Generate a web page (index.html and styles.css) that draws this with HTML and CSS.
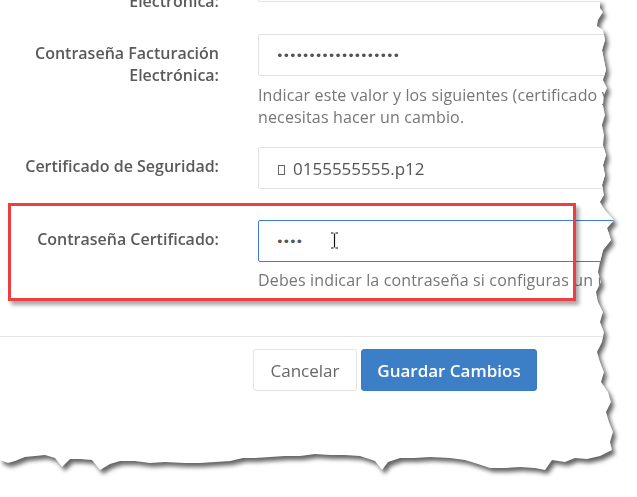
FILE: index.html
```html
<!DOCTYPE html>
<html lang="es">
<head>
<meta charset="utf-8">
<title>Configuración</title>
<link rel="stylesheet" href="styles.css">
</head>
<body>
<div class="frame">
  <div class="paper">
    <form class="form">
      <div class="group group-a">
        <label class="label">Usuario Facturación<br>Electrónica:</label>
        <div class="control"><div class="input"></div></div>
      </div>
      <div class="group group-b">
        <label class="label">Contraseña Facturación<br>Electrónica:</label>
        <div class="control">
          <div class="input"><span class="dots">•••••••••••••••••••</span></div>
          <p class="help">Indicar este valor y los siguientes (certificado y contraseña) solo si<br>necesitas hacer un cambio.</p>
        </div>
      </div>
      <div class="group group-c">
        <label class="label">Certificado de Seguridad:</label>
        <div class="control">
          <div class="input input-file"><span class="file-icon"></span><span>0155555555.p12</span></div>
        </div>
      </div>
      <div class="group group-d">
        <label class="label">Contraseña Certificado:</label>
        <div class="control">
          <div class="input input-focus"><span class="dots">••••</span>
            <svg class="ibeam" width="9" height="17" viewBox="0 0 9 17"><path d="M1 1h2.5M5.5 1H8M4.5 1.5v14M1 16h2.5M5.5 16H8" stroke="#111" stroke-width="1.2" fill="none"/></svg>
          </div>
          <p class="help">Debes indicar la contraseña si configuras un nuevo certificado.</p>
        </div>
      </div>
      <hr class="divider">
      <div class="footer">
        <button type="button" class="btn btn-default">Cancelar</button>
        <button type="button" class="btn btn-primary">Guardar Cambios</button>
      </div>
    </form>
    <div class="annotation"></div>
  </div>
</div>
</body>
</html>
```
FILE: styles.css
```css
html, body {
  margin: 0;
  padding: 0;
  background: #ffffff;
}
body {
  font-family: "Open Sans", "Noto Sans", sans-serif;
  width: 637px;
  height: 497px;
  overflow: hidden;
}
.frame {
  filter: drop-shadow(3px 4px 2px rgba(0, 0, 0, 0.6));
}
.paper {
  position: relative;
  width: 637px;
  height: 497px;
  background: #ffffff;
  overflow: hidden;
  clip-path: polygon(0px 0px, 600px 0px, 600px 8px, 603px 12px, 598px 20px, 597px 26px, 603px 30px, 605px 40px, 602px 50px, 604px 60px, 606px 70px, 603px 80px, 607px 88px, 604px 95px, 603px 105px, 605px 115px, 602px 125px, 604px 135px, 603px 145px, 606px 155px, 603px 165px, 605px 175px, 602px 185px, 604px 195px, 600px 202px, 605px 210px, 614px 220px, 607px 228px, 611px 240px, 603px 250px, 600px 262px, 598px 272px, 601px 282px, 596px 292px, 598px 302px, 603px 312px, 600px 322px, 604px 332px, 602px 342px, 597px 352px, 600px 362px, 604px 372px, 601px 382px, 608px 392px, 611px 402px, 606px 412px, 609px 422px, 613px 432px, 610px 442px, 612px 450px, 600px 456px, 587px 459px, 575px 458px, 565px 462px, 552px 460px, 545px 470px, 535px 468px, 520px 467px, 505px 468px, 490px 468px, 478px 464px, 465px 460px, 450px 458px, 430px 457px, 414px 458px, 400px 458px, 388px 462px, 382px 470px, 375px 461px, 360px 456px, 345px 455px, 330px 455px, 315px 454px, 300px 456px, 285px 456px, 270px 457px, 255px 458px, 243px 458px, 230px 461px, 215px 462px, 200px 463px, 185px 463px, 165px 462px, 150px 463px, 135px 461px, 120px 461px, 110px 464px, 100px 470px, 92px 460px, 80px 459px, 70px 459px, 62px 467px, 55px 458px, 45px 455px, 35px 456px, 25px 457px, 15px 461px, 8px 463px, 0px 460px);
}
.form {
  margin: 0;
  padding-top: 0;
}
.group {
  display: grid;
  grid-template-columns: 219px 400px;
  column-gap: 39px;
  align-items: start;
}
.group-a { margin-top: -40px; margin-bottom: 22px; }
.group-b { margin-bottom: 19px; }
.group-c { margin-bottom: 31px; }
.group-d { margin-bottom: 0; }
.label {
  display: block;
  text-align: right;
  padding-top: 8px;
  font-size: 16px;
  line-height: 22px;
  font-weight: 600;
  color: #5a5a5a;
}
.control {
  position: relative;
}
.input {
  position: relative;
  box-sizing: border-box;
  height: 42px;
  border: 1px solid #e2e2e2;
  border-radius: 2px;
  padding: 0 16px;
  display: flex;
  align-items: center;
  font-size: 17px;
  color: #555555;
  background: #ffffff;
}
.input-focus {
  border-color: #3d7fcf;
}
.dots {
  font-family: "DejaVu Sans", sans-serif;
  font-size: 13px;
  letter-spacing: -1.2px;
  color: #555555;
  margin-left: 1px;
}
.input-file {
  gap: 8px;
}
.file-icon {
  display: inline-block;
  box-sizing: border-box;
  width: 7px;
  height: 10px;
  border: 1px solid #666666;
  margin: 3px 0 0 3px;
}
.ibeam {
  position: absolute;
  left: 71px;
  top: 11px;
}
.help {
  margin: 7px 0 0;
  font-size: 16px;
  line-height: 22px;
  letter-spacing: 0.15px;
  color: #767676;
  white-space: nowrap;
}
.group-b .help { margin-top: 8px; }
.divider {
  margin: 45px 0 0;
  border: 0;
  border-top: 1px solid #e6e6e6;
  height: 0;
}
.footer {
  display: flex;
  gap: 4px;
  padding: 12px 0 0 253px;
}
.btn {
  box-sizing: border-box;
  height: 42px;
  border-radius: 3px;
  font-family: "Open Sans", "Noto Sans", sans-serif;
  font-size: 17px;
  padding: 0 16px;
  white-space: nowrap;
  cursor: pointer;
}
.btn-default {
  width: 104px;
  background: #ffffff;
  border: 1px solid #e3e3e3;
  color: #666666;
}
.btn-primary {
  width: 176px;
  padding: 0;
  background: #3d7fc6;
  border: 1px solid #3a7bc2;
  color: #ffffff;
  font-weight: 600;
}
.annotation {
  position: absolute;
  left: 8px;
  top: 203px;
  width: 568px;
  height: 98px;
  box-sizing: border-box;
  border: 3px solid #ef3e42;
  box-shadow: 3px 4px 4px rgba(0, 0, 0, 0.35);
  pointer-events: none;
}
```
